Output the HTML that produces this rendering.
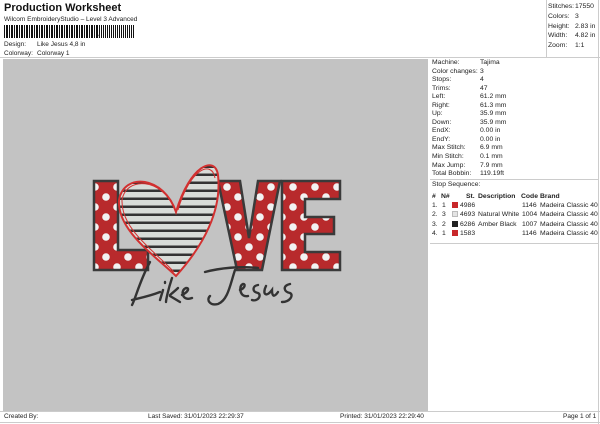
<!DOCTYPE html>
<html><head><style>
body{margin:0;width:600px;height:424px;background:#fff;font-family:"Liberation Sans",sans-serif;font-size:7px;color:#222;position:relative;overflow:hidden}
.a{position:absolute;white-space:nowrap}
</style></head><body>
<div class="a" style="left:4px;top:2px;font-size:11px;font-weight:bold;color:#111">Production Worksheet</div>
<div class="a" style="left:4px;top:16px;font-size:6.5px">Wilcom EmbroideryStudio – Level 3 Advanced</div>
<div class="a" style="left:4px;top:25px;width:98px;height:13px;background:repeating-linear-gradient(90deg,#111 0 1px,#fff 1px 2px,#111 2px 3px,#111 3px 4px,#fff 4px 5px)"></div>
<div class="a" style="left:98px;top:29px;font-size:8px;font-weight:bold">,</div>
<div class="a" style="left:103px;top:25px;width:32px;height:13px;background:repeating-linear-gradient(90deg,#111 0 1px,#fff 1px 2px,#111 2px 3px,#fff 3px 4px)"></div>
<div class="a" style="left:4px;top:41px;font-size:6.5px">Design:</div><div class="a" style="left:37px;top:41px;font-size:6.5px">Like Jesus 4,8 in</div>
<div class="a" style="left:4px;top:50px;font-size:6.5px">Colorway:</div><div class="a" style="left:37px;top:50px;font-size:6.5px">Colorway 1</div>
<div class="a" style="left:0;top:57px;width:600px;height:1px;background:#ccc"></div>
<div class="a" style="left:546px;top:0;width:1px;height:57px;background:#ccc"></div>
<div class="a" style="left:598px;top:0;width:1px;height:424px;background:#ccc"></div>
<div class="a" style="left:548px;top:2px;line-height:9.8px;font-size:6.8px">Stitches:<br>Colors:<br>Height:<br>Width:<br>Zoom:</div>
<div class="a" style="left:575px;top:2px;line-height:9.8px;font-size:6.8px">17550<br>3<br>2.83 in<br>4.82 in<br>1:1</div>
<div class="a" style="left:3px;top:59px;width:425px;height:352px;background:#c3c3c3"></div>
<div class="a" style="left:432px;top:59px;line-height:8.55px;font-size:6.8px">Machine:<br>Color changes:<br>Stops:<br>Trims:<br>Left:<br>Right:<br>Up:<br>Down:<br>EndX:<br>EndY:<br>Max Stitch:<br>Min Stitch:<br>Max Jump:<br>Total Bobbin:</div>
<div class="a" style="left:480px;top:59px;line-height:8.55px;font-size:6.8px">Tajima<br>3<br>4<br>47<br>61.2 mm<br>61.3 mm<br>35.9 mm<br>35.9 mm<br>0.00 in<br>0.00 in<br>6.9 mm<br>0.1 mm<br>7.9 mm<br>119.19ft</div>
<div class="a" style="left:430px;top:179px;width:168px;height:1px;background:#ccc"></div>
<div class="a" style="left:432px;top:181px;font-size:6.8px">Stop Sequence:</div>
<div class="a" style="left:430px;top:243px;width:168px;height:1px;background:#ccc"></div>
<div class="a" style="left:432px;top:192px;font-size:6.8px;line-height:9.3px">
<div style="position:relative;height:9px;font-weight:bold;text-decoration:underline"><span class="a" style="left:0">#</span><span class="a" style="left:9px">N#</span><span class="a" style="left:34px">St.</span><span class="a" style="left:46px">Description</span><span class="a" style="left:89px">Code</span><span class="a" style="left:108px">Brand</span></div>
<div style="position:relative;height:9.3px"><span class="a" style="left:0">1.</span><span class="a" style="left:10px">1</span><span class="a" style="left:20px;top:1px;width:6px;height:6px;background:#c8282a"></span><span class="a" style="left:28px">4986</span><span class="a" style="left:90px">1146</span><span class="a" style="left:108px">Madeira Classic 40</span></div>
<div style="position:relative;height:9.3px"><span class="a" style="left:0">2.</span><span class="a" style="left:10px">3</span><span class="a" style="left:20px;top:1px;width:6px;height:6px;background:#e4e4e4;border:1px solid #bbb;box-sizing:border-box"></span><span class="a" style="left:28px">4693</span><span class="a" style="left:46px">Natural White</span><span class="a" style="left:90px">1004</span><span class="a" style="left:108px">Madeira Classic 40</span></div>
<div style="position:relative;height:9.3px"><span class="a" style="left:0">3.</span><span class="a" style="left:10px">2</span><span class="a" style="left:20px;top:1px;width:6px;height:6px;background:#222"></span><span class="a" style="left:28px">6286</span><span class="a" style="left:46px">Amber Black</span><span class="a" style="left:90px">1007</span><span class="a" style="left:108px">Madeira Classic 40</span></div>
<div style="position:relative;height:9.3px"><span class="a" style="left:0">4.</span><span class="a" style="left:10px">1</span><span class="a" style="left:20px;top:1px;width:6px;height:6px;background:#c8282a"></span><span class="a" style="left:28px">1583</span><span class="a" style="left:90px">1146</span><span class="a" style="left:108px">Madeira Classic 40</span></div>
</div>
<div class="a" style="left:0;top:411px;width:600px;height:1px;background:#ccc"></div>
<div class="a" style="left:0;top:422px;width:600px;height:1px;background:#ccc"></div>
<div class="a" style="left:4px;top:413px;font-size:6.5px">Created By:</div>
<div class="a" style="left:148px;top:413px;font-size:6.5px">Last Saved: 31/01/2023 22:29:37</div>
<div class="a" style="left:340px;top:413px;font-size:6.5px">Printed: 31/01/2023 22:29:40</div>
<div class="a" style="left:563px;top:413px;font-size:6.5px">Page 1 of 1</div>
<svg class="a" style="left:0;top:0" width="600" height="424">
<defs>
<pattern id="dots" width="22" height="20" patternUnits="userSpaceOnUse" x="2" y="2"><rect width="22" height="20" fill="#b82a2c"/><circle cx="5" cy="5" r="3.8" fill="#f2f2f2"/><circle cx="16" cy="15" r="3.8" fill="#f2f2f2"/></pattern>
<pattern id="str" width="10" height="8" patternUnits="userSpaceOnUse"><rect width="10" height="8" fill="#d8dcd8"/><rect y="5.5" width="10" height="2.5" fill="#333"/></pattern>
</defs>
<g stroke="#3a3a3a" stroke-width="2.5">
<path d="M94 181H118V250H148V270H94Z" fill="url(#dots)"/>
<path d="M218 181H240L249 238L258 181H280L262 270H237Z" fill="url(#dots)"/>
<path d="M282 181H340V199H305V217H334V234H305V252H340V270H282Z" fill="url(#dots)"/>
</g>
<path d="M176 212C164 176 124 172 119 200C117 230 154 255 176 276C204 245 222 210 218 175C215 155 190 165 176 212Z" fill="url(#str)" stroke="#d23030" stroke-width="2"/>
<path d="M174 208C162 178 126 176 122 200C121 230 156 252 174 272M178 210C190 168 212 160 215 178" fill="none" stroke="#d23030" stroke-width="1"/>
<g fill="none" stroke="#333" stroke-width="2.4" stroke-linecap="round">
<path d="M150 262C140 280 135 300 132 305M132 300C140 298 150 296 160 292"/>
<path d="M163 290L160 300M165 282L165 283"/>
<path d="M172 278C168 290 166 300 166 302M170 295C176 290 178 288 178 288M170 296L180 302"/>
<path d="M182 295C188 292 190 288 186 288C180 290 182 302 192 298"/>
<path d="M205 272C220 268 240 266 258 268M235 270C230 285 228 300 218 304C210 306 206 300 210 296"/>
<path d="M240 290C245 288 246 284 243 284C238 286 240 298 248 296"/>
<path d="M258 285C252 286 252 292 258 293C262 295 258 302 252 300"/>
<path d="M266 286C262 294 266 298 272 290C272 296 274 298 278 292"/>
<path d="M290 284C282 286 284 292 290 293C294 295 290 302 282 302"/>
</g>
</svg>
</body></html>
